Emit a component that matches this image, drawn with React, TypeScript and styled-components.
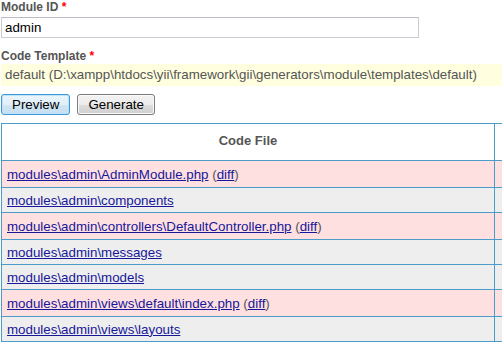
import React from "react";
import styled, { createGlobalStyle } from "styled-components";

const GlobalStyle = createGlobalStyle`
  html, body {
    margin: 0;
    padding: 0;
    background: #ffffff;
    overflow: hidden;
  }
  body {
    font-family: "Liberation Sans", Arial, sans-serif;
    color: #555555;
  }
`;

const Page = styled.div`
  width: 502px;
  height: 347px;
  overflow: hidden;
  padding-left: 1px;
  box-sizing: border-box;
`;

const Label = styled.label<{ $gap?: number }>`
  display: block;
  margin-top: ${(p) => p.$gap ?? 0}px;
  font-size: 12px;
  line-height: 15px;
  font-weight: bold;
  color: #555555;
`;

const Required = styled.span`
  color: #ff0000;
`;

const TextInput = styled.input`
  display: block;
  width: 418px;
  height: 21px;
  margin: 2px 0 0 0;
  padding: 0 3px;
  box-sizing: border-box;
  border: 1px solid #c9ccd3;
  border-top-color: #b9bcc4;
  font-family: "Liberation Sans", Arial, sans-serif;
  font-size: 13.33px;
  color: #000000;
  outline: none;
  background: #ffffff;
`;

const Sticky = styled.div`
  height: 22px;
  padding: 3px 4px;
  box-sizing: border-box;
  background: #ffffe0;
  font-size: 13.33px;
  line-height: 16px;
  color: #555555;
  white-space: nowrap;
  margin-right: -1px;
`;

const Buttons = styled.div`
  display: flex;
  gap: 7px;
  margin-top: 8px;
`;

const Button = styled.button<{ $focused?: boolean }>`
  height: 21px;
  padding: 0 10px;
  box-sizing: border-box;
  border-radius: 3px;
  border: 1px solid ${(p) => (p.$focused ? "#3c99d8" : "#7a7a7a")};
  background: ${(p) =>
    p.$focused
      ? "linear-gradient(#eaf5fc 0%, #e2eff8 50%, #d0e6f4 51%, #c6def0 100%)"
      : "linear-gradient(#f3f3f3 0%, #ebebeb 50%, #dddddd 51%, #cfcfcf 100%)"};
  box-shadow: inset 0 0 0 1px ${(p) => (p.$focused ? "#bfe3fa" : "#fcfcfc")};
  font-family: "Liberation Sans", Arial, sans-serif;
  font-size: 13.33px;
  color: #000000;
  line-height: 19px;
`;

const Table = styled.table`
  margin-top: 8px;
  border-collapse: collapse;
  table-layout: fixed;
  width: 563px;
  font-size: 13.33px;
`;

const Th = styled.th`
  height: 37px;
  padding: 0 5px 3px;
  border: 1px solid #4a9dcb;
  background: #ffffff;
  color: #555555;
  font-weight: bold;
  font-size: 13px;
  text-align: center;
  box-sizing: border-box;
`;

const Row = styled.tr<{ $overwrite?: boolean }>`
  height: ${(p) => (p.$overwrite ? 27 : 25)}px;
  background: ${(p) => (p.$overwrite ? "#ffe0e0" : "#eeeeee")};
`;

const Td = styled.td`
  padding: 0 5px;
  border: 1px solid #4a9dcb;
  color: #555555;
  vertical-align: middle;
  white-space: nowrap;
  overflow: hidden;
`;

const Link = styled.a`
  color: #17179a;
  text-decoration: underline;
`;

const files: { path: string; diff: boolean }[] = [
  { path: "modules\\admin\\AdminModule.php", diff: true },
  { path: "modules\\admin\\components", diff: false },
  { path: "modules\\admin\\controllers\\DefaultController.php", diff: true },
  { path: "modules\\admin\\messages", diff: false },
  { path: "modules\\admin\\models", diff: false },
  { path: "modules\\admin\\views\\default\\index.php", diff: true },
  { path: "modules\\admin\\views\\layouts", diff: false },
];

export default function App() {
  return (
    <Page>
      <GlobalStyle />
      <Label>
        Module ID <Required>*</Required>
      </Label>
      <TextInput defaultValue="admin" />
      <Label $gap={11}>
        Code Template <Required>*</Required>
      </Label>
      <Sticky>default (D:\xampp\htdocs\yii\framework\gii\generators\module\templates\default)</Sticky>
      <Buttons>
        <Button $focused>Preview</Button>
        <Button>Generate</Button>
      </Buttons>
      <Table>
        <colgroup>
          <col style={{ width: 493 }} />
          <col style={{ width: 70 }} />
        </colgroup>
        <thead>
          <tr>
            <Th>Code File</Th>
            <Th />
          </tr>
        </thead>
        <tbody>
          {files.map((f) => (
            <Row key={f.path} $overwrite={f.diff}>
              <Td>
                <Link href="#">{f.path}</Link>
                {f.diff && (
                  <>
                    {" ("}
                    <Link href="#">diff</Link>
                    {")"}
                  </>
                )}
              </Td>
              <Td />
            </Row>
          ))}
        </tbody>
      </Table>
    </Page>
  );
}
